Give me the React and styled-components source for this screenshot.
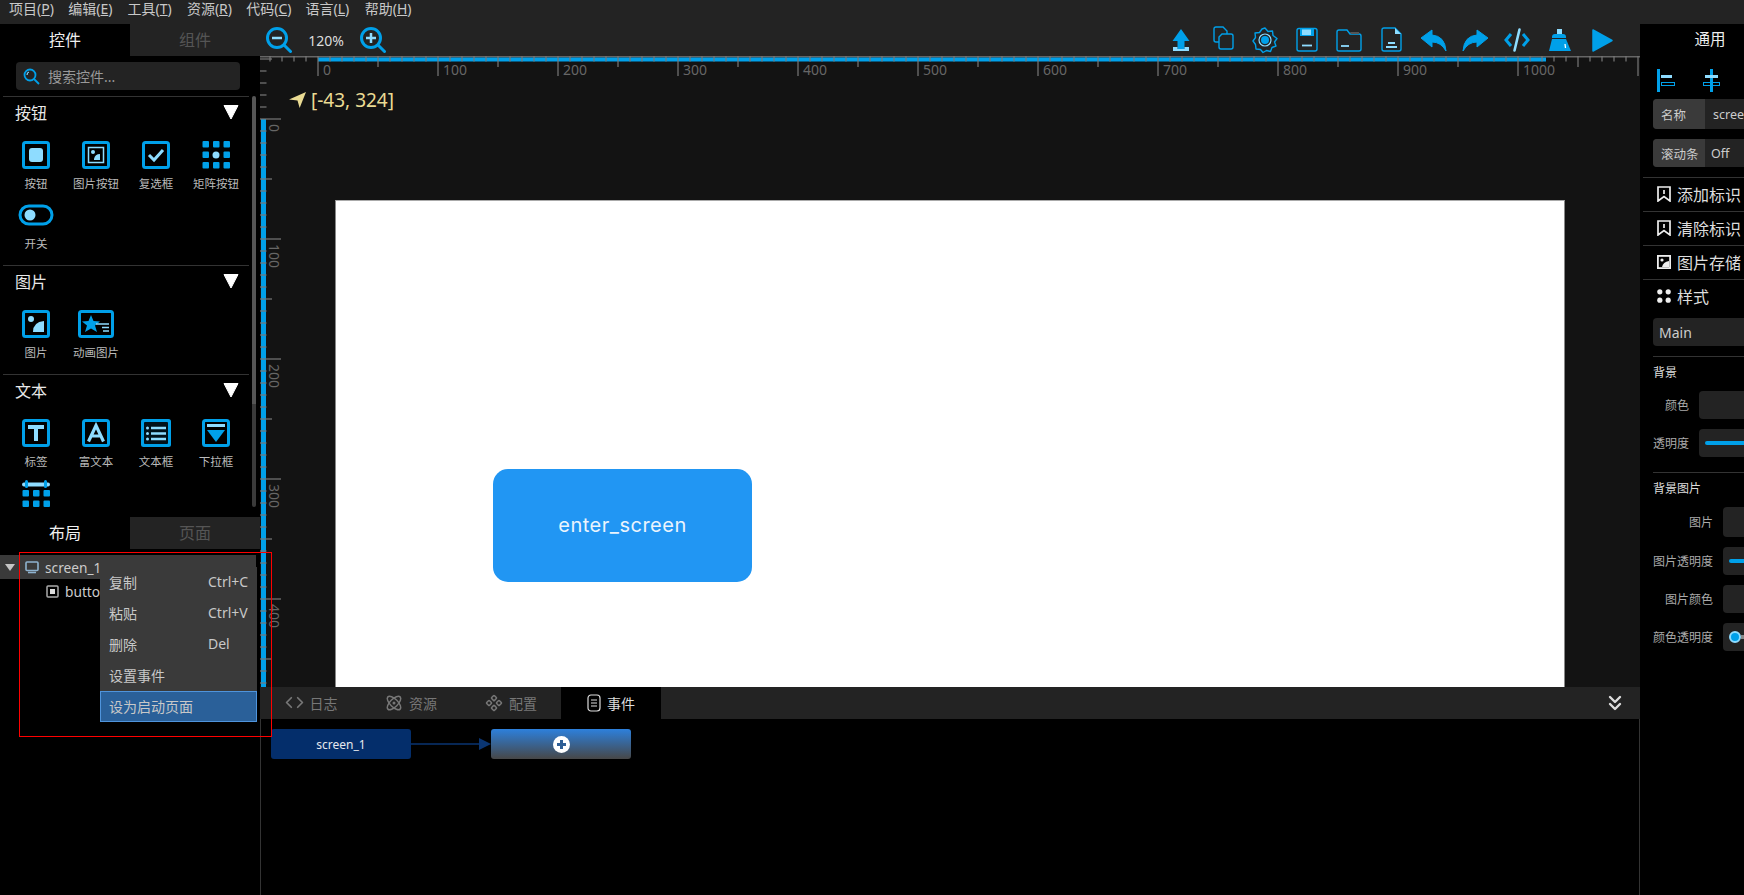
import React from "react";
import styled, { createGlobalStyle } from "styled-components";
import { Code, Atom, Component, ChevronsDown } from "lucide-react";

const BLUE = "#00a0e9";
const LIGHT = "#8edcff";
const FONT = `"Noto Sans", "Noto Sans CJK SC", sans-serif`;

const GlobalStyle = createGlobalStyle`
  html, body {
    margin: 0;
    padding: 0;
    background: #000;
    overflow: hidden;
  }
  * {
    box-sizing: border-box;
  }
`;

const Screen = styled.div`
  position: relative;
  width: 1744px;
  height: 895px;
  overflow: hidden;
  background: #000;
  color: #ddd;
  font-family: ${FONT};
`;

const MenuBar = styled.div`
  height: 24px;
  display: flex;
  align-items: center;
  background: #232323;
  padding: 0 0 6px 9px;
  gap: 9.3px;
`;

const MenuItem = styled.span`
  width: 50px;
  font-size: 14px;
  line-height: 16px;
  white-space: nowrap;
  color: #c8c8c8;
`;

const Body = styled.div`
  height: 871px;
  display: flex;
`;

/* 左侧 */
const LeftPane = styled.div`
  width: 260px;
  flex: none;
  display: flex;
  flex-direction: column;
  position: relative;
`;

const TabRow = styled.div`
  height: 32px;
  flex: none;
  display: flex;
`;

const Tab = styled.div`
  width: ${(p) => p.$width || 130}px;
  height: 32px;
  padding-bottom: 2px;
  display: flex;
  align-items: center;
  justify-content: center;
  font-size: 16px;
  background: ${(p) => (p.$active ? "#000" : "#232323")};
  color: ${(p) => (p.$active ? "#f0f0f0" : "#555")};
`;

const SearchBox = styled.div`
  height: 28px;
  margin: 6px 20px 6px 16px;
  display: flex;
  align-items: center;
  gap: 8px;
  padding-left: 7px;
  background: #232323;
  border-radius: 4px;
  font-size: 14px;
  color: #999;
`;

const WidgetList = styled.div`
  height: 421px;
  flex: none;
  overflow: hidden;
  position: relative;
`;

const ScrollThumb = styled.div`
  position: absolute;
  left: 252px;
  top: 0;
  width: 4px;
  height: 411px;
  border-radius: 2px;
  background: linear-gradient(to bottom, #555 0 75%, #3a3a3a 75%);
`;

const Section = styled.div`
  margin-left: 3px;
  width: 246px;
  border-top: 1px solid #333;
  padding-bottom: 4px;
`;

const SectionHead = styled.div`
  height: 44px;
  padding: 0 10px 14px 12px;
  display: flex;
  align-items: center;
  justify-content: space-between;
  font-size: 16px;
  color: #e8e8e8;
`;

const WidgetGrid = styled.div`
  display: grid;
  grid-template-columns: repeat(4, 60px);
  grid-auto-rows: 60px;
  margin-left: 3px;
`;

const Widget = styled.div`
  display: flex;
  flex-direction: column;
  align-items: center;
  font-size: 11.5px;
  color: #bbb;
  line-height: 16px;
  white-space: nowrap;
`;

const WidgetIcon = styled.div`
  height: 28px;
  display: flex;
  align-items: center;
  justify-content: center;
  margin-bottom: 7px;
`;

const Tree = styled.div`
  flex: 1;
  padding-top: 6px;
  position: relative;
`;

const TreeRow = styled.div`
  height: 24px;
  width: ${(p) => (p.$selected ? "256px" : "auto")};
  display: flex;
  align-items: center;
  gap: 6px;
  padding-left: ${(p) => p.$indent}px;
  font-size: 13.7px;
  color: #ccc;
  background: ${(p) => (p.$selected ? "#3a3a3a" : "transparent")};
`;

const TreeCaret = styled.svg`
  width: 10px;
  height: 7px;
  margin-right: 4px;
  flex: none;
`;

const ContextMenu = styled.div`
  position: absolute;
  left: 100px;
  top: 18px;
  width: 157px;
  background: #3a3a3a;
`;

const ContextItem = styled.div`
  height: 31px;
  display: flex;
  align-items: center;
  padding: 0 0 2px 8px;
  font-size: 14px;
  color: #c8c8c8;
  border: 1px solid ${(p) => (p.$active ? "#4f94dc" : "transparent")};
  background: ${(p) => (p.$active ? "#2a6099" : "transparent")};
`;

const ContextName = styled.span`
  width: 99px;
`;

const RedFrame = styled.div`
  position: absolute;
  left: 19px;
  top: 552px;
  width: 253px;
  height: 185px;
  border: 1px solid #f00;
  pointer-events: none;
`;

/* 中间 */
const CenterPane = styled.div`
  width: 1380px;
  flex: none;
  display: flex;
  flex-direction: column;
`;

const Toolbar = styled.div`
  height: 32px;
  flex: none;
  display: flex;
  align-items: center;
  background: #232323;
  padding: 0 25px 0 6px;
`;

const ZoomLabel = styled.span`
  width: 68px;
  text-align: center;
  font-size: 14px;
  color: #ddd;
`;

const ToolIcons = styled.div`
  margin-left: auto;
  display: flex;
  gap: 14px;
`;

const ToolSvg = styled.svg`
  width: 28px;
  height: 28px;
  display: block;
`;

const Canvas = styled.div`
  height: 631px;
  flex: none;
  position: relative;
  overflow: hidden;
  background: #131313;
`;

const RulerSvg = styled.svg`
  position: absolute;
  left: 0;
  top: 0;
`;

const CoordTag = styled.div`
  position: absolute;
  left: 29px;
  top: 31px;
  display: flex;
  align-items: center;
  gap: 5px;
  font-size: 19px;
  line-height: 26px;
  color: #eadb93;
`;

const Page = styled.div`
  position: absolute;
  left: 75px;
  top: 144px;
  width: 1230px;
  height: 488px;
  background: #fff;
  border-left: 1px solid #888;
  border-right: 1px solid #888;
  border-top: 1px solid #aaa;
`;

const PageButton = styled.div`
  position: absolute;
  left: 233px;
  top: 413px;
  width: 259px;
  height: 113px;
  padding-bottom: 2px;
  border-radius: 15px;
  background: #2196f3;
  display: flex;
  align-items: center;
  justify-content: center;
  font-family: Inter, sans-serif;
  font-size: 20px;
  color: #eaf4fd;
  letter-spacing: 0.5px;
`;

const BottomTabs = styled.div`
  height: 32px;
  flex: none;
  display: flex;
  align-items: center;
  background: #232323;
  padding-left: 1px;
  position: relative;
`;

const BottomTab = styled.div`
  width: 100px;
  height: 32px;
  padding-bottom: 1px;
  display: flex;
  align-items: center;
  justify-content: center;
  gap: 6px;
  font-size: 14px;
  background: ${(p) => (p.$active ? "#000" : "transparent")};
  color: ${(p) => (p.$active ? "#ddd" : "#777")};
`;

const Collapse = styled.div`
  margin-left: auto;
  margin-right: 13px;
  display: flex;
  color: #ddd;
`;

const FlowArea = styled.div`
  flex: 1;
  display: flex;
  align-items: flex-start;
  padding: 10px;
  border-left: 1px solid #333;
  border-right: 1px solid #333;
`;

const FlowNode = styled.div`
  width: 140px;
  height: 30px;
  border-radius: 3px;
  display: flex;
  align-items: center;
  justify-content: center;
  font-size: 12px;
  color: #e4e8ee;
  background: ${(p) => (p.$add ? "linear-gradient(to bottom, #2d80dc, #474747)" : "#042e6b")};
`;

const FlowArrow = styled.svg`
  width: 80px;
  height: 30px;
  flex: none;
`;

/* 右侧 */
const RightPane = styled.div`
  width: 104px;
  flex: none;
  overflow: hidden;
`;

const RightInner = styled.div`
  width: 280px;
`;

const RightTab = styled.div`
  width: 140px;
  height: 32px;
  padding-bottom: 3px;
  display: flex;
  align-items: center;
  justify-content: center;
  font-size: 15.5px;
  color: #eee;
`;

const AlignRow = styled.div`
  height: 43px;
  padding: 5px 0 0 17px;
  display: flex;
  align-items: center;
  gap: 28px;
`;

const FieldRow = styled.div`
  margin: 0 0 10px 13px;
  height: ${(p) => p.$height}px;
  display: flex;
  border-radius: 4px;
  overflow: hidden;
  background: #232323;
  font-size: 12.5px;
`;

const FieldLabel = styled.div`
  width: 52px;
  display: flex;
  align-items: center;
  padding-left: 8px;
  background: #3a3a3a;
  color: #ccc;
`;

const FieldValue = styled.div`
  padding-left: ${(p) => p.$pad}px;
  display: flex;
  align-items: center;
  color: #ccc;
`;

const ActionRow = styled.div`
  margin-left: 3px;
  height: 34px;
  display: flex;
  align-items: center;
  gap: 6px;
  padding: 0 0 2px 14px;
  border-top: 1px solid #333;
  font-size: 16px;
  color: #ddd;
`;

const StyleSelect = styled.div`
  margin: 5px 0 10px 13px;
  height: 28px;
  padding-left: 6px;
  display: flex;
  align-items: center;
  border-radius: 4px;
  background: #232323;
  font-size: 14px;
  color: #ccc;
`;

const PropGroup = styled.div`
  margin-left: 13px;
  border-top: 1px solid #333;
  padding-bottom: 5px;
`;

const PropTitle = styled.div`
  height: 34px;
  padding-bottom: 5px;
  display: flex;
  align-items: center;
  font-size: 12px;
  color: #ddd;
`;

const PropRow = styled.div`
  height: ${(p) => p.$height || 28}px;
  margin-bottom: 10px;
  display: flex;
  align-items: center;
  gap: 10px;
  font-size: 12px;
  color: #aaa;
`;

const PropLabel = styled.span`
  width: ${(p) => p.$width}px;
  padding-bottom: 1px;
  text-align: right;
  white-space: nowrap;
`;

const PropBox = styled.div`
  flex: 1;
  height: 100%;
  padding-left: 6px;
  display: flex;
  align-items: center;
  border-radius: 4px;
  background: #232323;
`;

const SliderFill = styled.div`
  width: 200px;
  height: 4px;
  border-radius: 2px;
  background: ${BLUE};
`;

const SliderKnob = styled.div`
  width: 12px;
  height: 12px;
  flex: none;
  border-radius: 50%;
  background: ${BLUE};
  border: 2px solid ${LIGHT};
`;

const SliderRest = styled.div`
  width: 200px;
  height: 4px;
  background: #888;
`;

/* 图标 */
const Svg = ({ w = 28, h = 28, children }) => (
  <svg width={w} height={h} viewBox={`0 0 ${w} ${h}`}>
    {children}
  </svg>
);

const Frame = () => <rect x="1.5" y="1.5" width="25" height="25" rx="2" fill="none" stroke={BLUE} strokeWidth="3" />;

const icons = {
  button: (
    <Svg>
      <Frame />
      <rect x="7" y="7" width="14" height="14" rx="3" fill={LIGHT} />
    </Svg>
  ),
  imgbutton: (
    <Svg>
      <Frame />
      <rect x="6.5" y="6.5" width="15" height="15" fill="none" stroke={LIGHT} strokeWidth="1.5" />
      <circle cx="11" cy="11" r="2" fill={LIGHT} />
      <path d="M12 18 Q13 13 18 13 V19 H12Z" fill={LIGHT} />
    </Svg>
  ),
  check: (
    <Svg>
      <Frame />
      <path d="M7 14 L12 19 L21 9" fill="none" stroke={LIGHT} strokeWidth="3" />
    </Svg>
  ),
  matrix: (
    <Svg>
      {[0, 1, 2].map((r) =>
        [0, 1, 2].map((c) =>
          r === 1 && c === 1 ? (
            <circle key={c} cx="14" cy="14" r="3.5" fill={LIGHT} />
          ) : (
            <rect key={`${r}${c}`} x={c * 10.5 + 0.5} y={r * 10.5} width="6.5" height="6.5" rx="1" fill={BLUE} />
          )
        )
      )}
    </Svg>
  ),
  toggle: (
    <Svg w={36} h={28}>
      <rect x="2" y="5" width="32" height="18" rx="9" fill="none" stroke={BLUE} strokeWidth="3" />
      <circle cx="12" cy="14" r="5.5" fill={LIGHT} />
    </Svg>
  ),
  image: (
    <Svg>
      <Frame />
      <circle cx="9" cy="9" r="3" fill={LIGHT} />
      <path d="M11 22 Q11 12 22 11 V22 Z" fill={LIGHT} />
    </Svg>
  ),
  anim: (
    <Svg w={36} h={28}>
      <rect x="1.5" y="1.5" width="33" height="25" rx="2" fill="#000" stroke={BLUE} strokeWidth="3" />
      <path d="M13 5 L15.5 11 L22 11.5 L17 15.5 L19 22 L13 18.5 L7 22 L9 15.5 L4 11.5 L10.5 11Z" fill={BLUE} />
      <path d="M18 14 H31 M24 17.5 H31 M25 21 H31" stroke={LIGHT} strokeWidth="1.5" />
    </Svg>
  ),
  label: (
    <Svg>
      <Frame />
      <path d="M6 6 H22 V10 H16 V22 H12 V10 H6Z" fill={LIGHT} />
    </Svg>
  ),
  rich: (
    <Svg>
      <Frame />
      <path d="M6.5 22.5 L14 6.5 L21.5 22.5 M9.5 17 H18.5" fill="none" stroke={LIGHT} strokeWidth="3.2" />
    </Svg>
  ),
  textarea: (
    <Svg w={30} h={28}>
      <rect x="0" y="0" width="30" height="28" rx="2.5" fill={BLUE} />
      <rect x="3" y="3" width="24" height="22" rx="1" fill="#00111a" />
      <circle cx="6.5" cy="9" r="1.5" fill={LIGHT} />
      <circle cx="6.5" cy="14.5" r="1.5" fill={LIGHT} />
      <circle cx="6.5" cy="20" r="1.5" fill={LIGHT} />
      <path d="M10 9 H25 M10 14.5 H25 M10 20 H25" stroke={LIGHT} strokeWidth="2.5" />
    </Svg>
  ),
  dropdown: (
    <Svg>
      <Frame />
      <rect x="5" y="5" width="18" height="3" fill={LIGHT} />
      <path d="M5 11 H23 L14 23Z" fill={BLUE} />
    </Svg>
  ),
  calendar: (
    <Svg>
      <rect x="0" y="3.5" width="28" height="4" rx="2" fill={LIGHT} />
      <rect x="3" y="1" width="3" height="8" rx="1.5" fill={BLUE} />
      <rect x="22" y="1" width="3" height="8" rx="1.5" fill={BLUE} />
      {[0, 1].map((r) =>
        [0, 1, 2].map((c) => (
          <rect key={`${r}${c}`} x={c * 10.5 + 0.5} y={r * 10.5 + 11} width="6.5" height="6.5" rx="1" fill={BLUE} />
        ))
      )}
    </Svg>
  ),
};

const sections = [
  {
    title: "按钮",
    items: [
      ["button", "按钮"],
      ["imgbutton", "图片按钮"],
      ["check", "复选框"],
      ["matrix", "矩阵按钮"],
      ["toggle", "开关"],
    ],
  },
  {
    title: "图片",
    items: [
      ["image", "图片"],
      ["anim", "动画图片"],
    ],
  },
  {
    title: "文本",
    items: [
      ["label", "标签"],
      ["rich", "富文本"],
      ["textarea", "文本框"],
      ["dropdown", "下拉框"],
      ["calendar", ""],
    ],
  },
];

const menus = [
  ["项目", "P"],
  ["编辑", "E"],
  ["工具", "T"],
  ["资源", "R"],
  ["代码", "C"],
  ["语言", "L"],
  ["帮助", "H"],
];

const Triangle = ({ size = 16, color = "#fff" }) => (
  <svg width={size} height={size} viewBox="0 0 16 16">
    <path d="M1 1.5 H15 L8 15Z" fill={color} stroke={color} strokeLinejoin="round" />
  </svg>
);

const Lens = ({ plus }) => (
  <svg width="26" height="26" viewBox="0 0 26 26">
    <circle cx="11" cy="11" r="9.5" fill="none" stroke={BLUE} strokeWidth="3" />
    <path d="M18 18 L24.5 24.5" stroke={BLUE} strokeWidth="3" strokeLinecap="round" />
    <path d={plus ? "M6 11 H16 M11 6 V16" : "M6 11 H16"} stroke={LIGHT} strokeWidth="2.5" />
  </svg>
);

const toolIcons = [
  <>
    <path d="M14 3 L22.5 15 H17.5 V23 H10.5 V15 H5.5Z" fill={BLUE} />
    <path d="M6 21 H10.5 V23 H17.5 V21 H22 V25 H6Z" fill={LIGHT} />
  </>,
  <>
    <path d="M10 16 H7 Q5 16 5 14 V3 Q5 1 7 1 H14 L18 5 V8" fill="none" stroke={BLUE} strokeWidth="1.4" />
    <path d="M13 8 H22 Q24 8 24 10 V21 Q24 23 22 23 H12 Q10 23 10 21 V11Z" fill="#232323" stroke={BLUE} strokeWidth="1.4" />
  </>,
  <>
    <path
      d="M14 2 L17 5.5 L21.5 5 L22 9.5 L26 12.5 L23.5 16 L25 20 L21 21.5 L19.5 25.5 L15.5 24.5 L12 26.5 L9.5 23.5 L5 23 L4.5 18.5 L2 15 L4.5 11.5 L4 7 L8.5 6.5 L11 3Z"
      fill="none"
      stroke={BLUE}
      strokeWidth="1.4"
      strokeLinejoin="round"
    />
    <circle cx="14" cy="14" r="6" fill="none" stroke={LIGHT} strokeWidth="1.2" />
    <circle cx="14" cy="14" r="4" fill={BLUE} />
  </>,
  <>
    <rect x="4" y="2.5" width="20" height="22.5" rx="2" fill="none" stroke={BLUE} strokeWidth="1.4" />
    <path d="M7 3 H21 V10 H7Z" fill={BLUE} />
    <rect x="9" y="3.5" width="9" height="5.5" fill={LIGHT} />
    <path d="M9 19.5 H19" stroke={LIGHT} strokeWidth="1.8" />
  </>,
  <>
    <path d="M2 6 Q2 4 4 4 H12 L15 8 H24 Q26 8 26 10 V23 Q26 25 24 25 H4 Q2 25 2 23Z" fill="none" stroke={BLUE} strokeWidth="1.4" />
    <path d="M15 6 H24 V8 H16Z" fill="#555" />
    <path d="M6 20 H14" stroke={LIGHT} strokeWidth="1.8" />
  </>,
  <>
    <path d="M7 2 H18 L24 8 V23 Q24 25 22 25 H7 Q5 25 5 23 V4 Q5 2 7 2Z" fill="none" stroke={BLUE} strokeWidth="1.4" />
    <path d="M18 2 L24 8 H18Z" fill={LIGHT} />
    <path d="M11 17 H18 M9 21 H20" stroke={LIGHT} strokeWidth="1.8" />
  </>,
  <path d="M2 12 L13 4 V9 Q26 10 27 25 Q22 16 13 16 V21Z" fill={BLUE} stroke={BLUE} strokeLinejoin="round" />,
  <path d="M27 12 L16 4 V9 Q3 10 2 25 Q7 16 16 16 V21Z" fill={BLUE} stroke={BLUE} strokeLinejoin="round" />,
  <>
    <path d="M8 8 L3 14 L8 20 M20 8 L25 14 L20 20" fill="none" stroke={BLUE} strokeWidth="3" />
    <path d="M16.5 3.5 L11.5 24.5" stroke={LIGHT} strokeWidth="2.6" strokeLinecap="round" />
  </>,
  <>
    <rect x="12" y="3" width="5" height="5" fill={LIGHT} />
    <path d="M7 11 Q7 8 10 8 H18 Q21 8 21 11 V12 H7Z" fill={BLUE} />
    <path d="M7 13 H21 L26 25 H4Z" fill={BLUE} />
    <path d="M20 18 L20.5 22" stroke="#fff" strokeWidth="1.3" />
  </>,
  <path d="M6 4 L25 14.5 L6 25Z" fill={BLUE} stroke={BLUE} strokeWidth="1.5" strokeLinejoin="round" />,
];

const seq = (from, to, step) => {
  const out = [];
  for (let v = from; v <= to; v += step) out.push(v);
  return out;
};

// 刻度尺: 0 点在 (58, 63), 100 = 120px
const Rulers = () => {
  const oy = 63;
  const ox = 58;
  const len = (k) => (k % 10 === 0 ? 20 : k % 5 === 0 ? 11 : 5.5);
  return (
    <RulerSvg width="1380" height="631">
      <rect x="0" y="0" width="1380" height="1.5" fill="#666" />
      <rect x={ox} y="1.5" width="1228" height="4" fill={BLUE} />
      <rect x="1" y={oy} width="5" height="568" fill={BLUE} />
      {seq(-5, 110, 1).map((k) => (
        <rect key={k} x={ox + k * 12 - 0.6} y="0" width="1.2" height={len(k)} fill="#777" />
      ))}
      {seq(-5, 47, 1).map((k) => (
        <rect key={k} x="0" y={oy + k * 12 - 0.6} width={len(k) + 1} height="1.2" fill="#777" />
      ))}
      {seq(0, 1000, 100).map((n) => (
        <text key={n} x={ox + n * 1.2 + 5} y="19" fontSize="14" fill="#666" fontFamily="Noto Sans, sans-serif">
          {n}
        </text>
      ))}
      {seq(0, 400, 100).map((n) => (
        <text
          key={n}
          transform={`translate(9 ${oy + n * 1.2 + 5}) rotate(90)`}
          fontSize="14"
          fill="#666"
          fontFamily="Noto Sans, sans-serif"
        >
          {n}
        </text>
      ))}
    </RulerSvg>
  );
};

const Bookmark = () => (
  <svg width="14" height="16" viewBox="0 0 14 16">
    <path d="M1 1 H13 V15 L7 10.5 L1 15Z M7 4 V8" fill="none" stroke="#eee" strokeWidth="1.7" />
  </svg>
);

const App = () => {
  return (
    <Screen>
      <GlobalStyle />
      <MenuBar>
        {menus.map(([name, key]) => (
          <MenuItem key={key}>
            {name}(<u>{key}</u>)
          </MenuItem>
        ))}
      </MenuBar>
      <Body>
        <LeftPane>
          <TabRow>
            <Tab $active>控件</Tab>
            <Tab>组件</Tab>
          </TabRow>
          <SearchBox>
            <svg width="17" height="17" viewBox="0 0 17 17">
              <circle cx="7" cy="7" r="5.5" fill="none" stroke={BLUE} strokeWidth="1.8" />
              <path d="M11 11 L16 16" stroke={BLUE} strokeWidth="1.8" />
              <path d="M4 7 Q4 4.5 6 4" fill="none" stroke={LIGHT} strokeWidth="1.2" />
            </svg>
            搜索控件...
          </SearchBox>
          <WidgetList>
            {sections.map((s) => (
              <Section key={s.title}>
                <SectionHead>
                  {s.title}
                  <Triangle />
                </SectionHead>
                <WidgetGrid>
                  {s.items.map(([icon, label]) => (
                    <Widget key={icon}>
                      <WidgetIcon>{icons[icon]}</WidgetIcon>
                      {label}
                    </Widget>
                  ))}
                </WidgetGrid>
              </Section>
            ))}
            <ScrollThumb />
          </WidgetList>
          <TabRow>
            <Tab $active>布局</Tab>
            <Tab>页面</Tab>
          </TabRow>
          <Tree>
            <TreeRow $selected $indent={5}>
              <TreeCaret viewBox="0 0 10 7">
                <path d="M0 0 H10 L5 7Z" fill="#c4c4c4" />
              </TreeCaret>
              <svg width="14" height="13" viewBox="0 0 14 13">
                <rect x="1" y="1" width="12" height="8.5" rx="1" fill="none" stroke="#8fb3cf" strokeWidth="1.6" />
                <path d="M3 11.5 H11" stroke="#8fb3cf" strokeWidth="1.6" />
              </svg>
              screen_1
            </TreeRow>
            <TreeRow $indent={46}>
              <svg width="13" height="13" viewBox="0 0 13 13">
                <rect x="1" y="1" width="11" height="11" rx="1" fill="none" stroke="#aaa" strokeWidth="1.5" />
                <rect x="4" y="4" width="5" height="5" fill="#ddd" />
              </svg>
              butto
            </TreeRow>
            <ContextMenu>
              <ContextItem>
                <ContextName>复制</ContextName>Ctrl+C
              </ContextItem>
              <ContextItem>
                <ContextName>粘贴</ContextName>Ctrl+V
              </ContextItem>
              <ContextItem>
                <ContextName>删除</ContextName>Del
              </ContextItem>
              <ContextItem>设置事件</ContextItem>
              <ContextItem $active>设为启动页面</ContextItem>
            </ContextMenu>
          </Tree>
        </LeftPane>

        <CenterPane>
          <Toolbar>
            <Lens />
            <ZoomLabel>120%</ZoomLabel>
            <Lens plus />
            <ToolIcons>
              {toolIcons.map((icon, i) => (
                <ToolSvg key={i} viewBox="0 0 28 28">
                  {icon}
                </ToolSvg>
              ))}
            </ToolIcons>
          </Toolbar>
          <Canvas>
            <Page />
            <PageButton>enter_screen</PageButton>
            <Rulers />
            <CoordTag>
              <svg width="17" height="17" viewBox="0 0 16 16">
                <path d="M16 0 L10 15 L8 8 L0 7Z" fill="#eadb93" />
              </svg>
              [-43, 324]
            </CoordTag>
          </Canvas>
          <BottomTabs>
            <BottomTab>
              <Code size={19} strokeWidth={2.2} />
              日志
            </BottomTab>
            <BottomTab>
              <Atom size={18} strokeWidth={2} />
              资源
            </BottomTab>
            <BottomTab>
              <Component size={18} strokeWidth={2} />
              配置
            </BottomTab>
            <BottomTab $active>
              <svg width="14" height="18" viewBox="0 0 14 18">
                <rect x="1" y="1" width="12" height="16" rx="3" fill="none" stroke="#ddd" strokeWidth="1.2" />
                <path d="M4 6 H10 M4 9 H10 M4 12 H10" stroke="#ddd" strokeWidth="1" />
              </svg>
              事件
            </BottomTab>
            <Collapse>
              <ChevronsDown size={24} strokeWidth={2.4} />
            </Collapse>
          </BottomTabs>
          <FlowArea>
            <FlowNode>screen_1</FlowNode>
            <FlowArrow viewBox="0 0 80 30">
              <path d="M0 15 H68" stroke="#0a3572" strokeWidth="1.6" />
              <path d="M68 9 L80 15 L68 21Z" fill="#0a3572" />
            </FlowArrow>
            <FlowNode $add>
              <svg width="17" height="17" viewBox="0 0 17 17">
                <circle cx="8.5" cy="8.5" r="8.5" fill="#fff" />
                <path d="M8.5 4 V13 M4 8.5 H13" stroke="#2f5f96" strokeWidth="3" />
              </svg>
            </FlowNode>
          </FlowArea>
        </CenterPane>

        <RightPane>
          <RightInner>
            <RightTab>通用</RightTab>
            <AlignRow>
              <svg width="18" height="23" viewBox="0 0 18 23">
                <rect x="0" y="0" width="3" height="23" fill={BLUE} />
                <rect x="4" y="6" width="11" height="3" fill={LIGHT} />
                <rect x="4.5" y="13.5" width="13" height="3" fill="none" stroke={BLUE} />
              </svg>
              <svg width="17" height="23" viewBox="0 0 17 23">
                <rect x="7" y="0" width="3" height="23" fill={BLUE} />
                <rect x="2" y="6" width="13" height="3" fill={LIGHT} />
                <rect x="0.5" y="13.5" width="16" height="3" fill="none" stroke={BLUE} />
              </svg>
            </AlignRow>
            <FieldRow $height={30}>
              <FieldLabel>名称</FieldLabel>
              <FieldValue $pad={8}>screen_1</FieldValue>
            </FieldRow>
            <FieldRow $height={28}>
              <FieldLabel>滚动条</FieldLabel>
              <FieldValue $pad={6}>Off</FieldValue>
            </FieldRow>
            <ActionRow>
              <Bookmark />
              添加标识
            </ActionRow>
            <ActionRow>
              <Bookmark />
              清除标识
            </ActionRow>
            <ActionRow>
              <svg width="14" height="14" viewBox="0 0 14 14">
                <rect x="0.9" y="0.9" width="12.2" height="12.2" fill="none" stroke="#eee" strokeWidth="1.8" />
                <circle cx="5" cy="5" r="1.6" fill="#eee" />
                <path d="M5 12 Q6 7 12 6 V12Z" fill="#eee" />
              </svg>
              图片存储
            </ActionRow>
            <ActionRow>
              <svg width="14" height="14" viewBox="0 0 14 14">
                <circle cx="2.8" cy="2.8" r="2.6" fill="#eee" />
                <circle cx="11.2" cy="2.8" r="2.6" fill="#eee" />
                <circle cx="2.8" cy="11.2" r="2.6" fill="#eee" />
                <circle cx="11.2" cy="11.2" r="2.6" fill="#eee" />
              </svg>
              样式
            </ActionRow>
            <StyleSelect>Main</StyleSelect>
            <PropGroup>
              <PropTitle>背景</PropTitle>
              <PropRow>
                <PropLabel $width={36}>颜色</PropLabel>
                <PropBox />
              </PropRow>
              <PropRow>
                <PropLabel $width={36}>透明度</PropLabel>
                <PropBox>
                  <SliderFill />
                </PropBox>
              </PropRow>
            </PropGroup>
            <PropGroup>
              <PropTitle>背景图片</PropTitle>
              <PropRow $height={30}>
                <PropLabel $width={60}>图片</PropLabel>
                <PropBox />
              </PropRow>
              <PropRow>
                <PropLabel $width={60}>图片透明度</PropLabel>
                <PropBox>
                  <SliderFill />
                </PropBox>
              </PropRow>
              <PropRow>
                <PropLabel $width={60}>图片颜色</PropLabel>
                <PropBox />
              </PropRow>
              <PropRow>
                <PropLabel $width={60}>颜色透明度</PropLabel>
                <PropBox>
                  <SliderKnob />
                  <SliderRest />
                </PropBox>
              </PropRow>
            </PropGroup>
          </RightInner>
        </RightPane>
      </Body>
      <RedFrame />
    </Screen>
  );
};

export default App;
